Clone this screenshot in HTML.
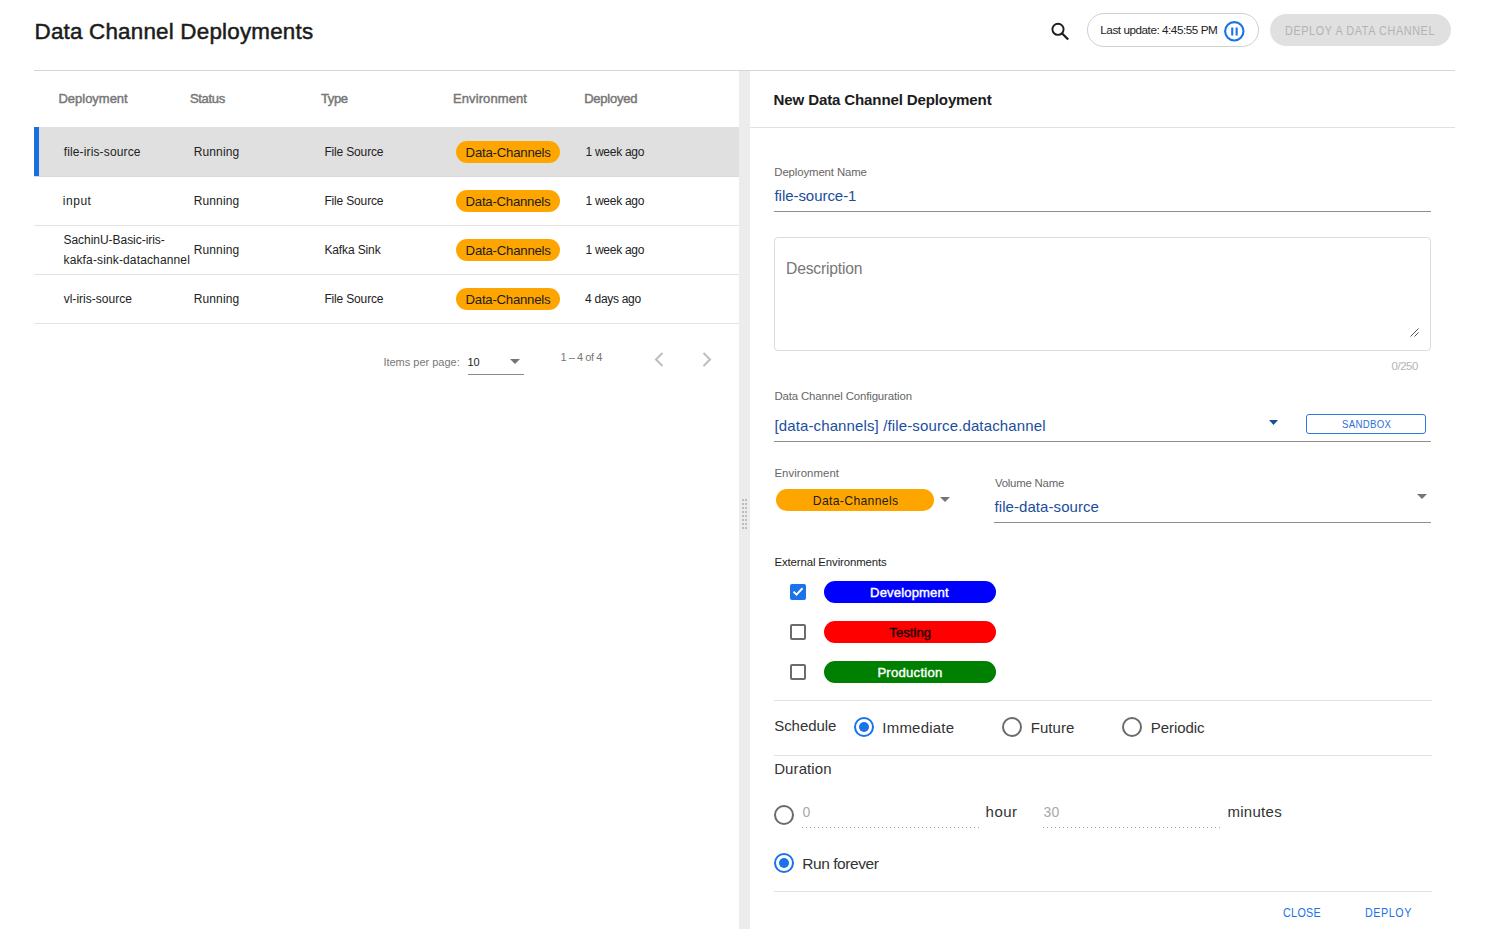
<!DOCTYPE html>
<html><head><meta charset="utf-8">
<style>
*{box-sizing:border-box;margin:0;padding:0}
html,body{width:1494px;height:929px;overflow:hidden;background:#fff}
body{position:relative;font-family:"Liberation Sans",sans-serif;color:#222}
.a{position:absolute;white-space:nowrap;line-height:1}
.ln{position:absolute;height:1px}
</style></head><body>

<!-- header -->
<div class="a" id="title" style="-webkit-text-stroke:0.5px #1c1c1c;left:34.5px;top:20.9px;font-size:22.4px;color:#1c1c1c;letter-spacing:0.21px">Data Channel Deployments</div>
<svg class="a" style="left:1048px;top:19px" width="24" height="24" viewBox="0 0 24 24"><circle cx="10" cy="10.3" r="5.6" fill="none" stroke="#1c1c1c" stroke-width="1.9"/><path d="M13.9 14.3L20.2 20.5" stroke="#1c1c1c" stroke-width="2.3"/></svg>
<div class="a" style="left:1087px;top:13px;width:172px;height:34px;border:1px solid #d0d0d0;border-radius:17px"></div>
<div class="a" id="lastupd" style="left:1100.3px;top:24.2px;font-size:11.7px;color:#222;letter-spacing:-0.45px">Last update: 4:45:55 PM</div>
<svg class="a" style="left:1224px;top:20.5px" width="21" height="21" viewBox="0 0 21 21"><circle cx="10.3" cy="10.3" r="9.2" fill="none" stroke="#1a73e8" stroke-width="2.1"/><rect x="7.2" y="6.5" width="2.1" height="8" fill="#1a73e8"/><rect x="11.6" y="6.5" width="2.1" height="8" fill="#1a73e8"/></svg>
<div class="a" style="left:1270px;top:14px;width:181px;height:32px;background:#e0e0e0;border-radius:16px"></div>
<div class="a" id="deploybtn" style="left:1285.3px;top:24.7px;font-size:12px;color:#b3b3b3;letter-spacing:0.70px;transform:scaleX(0.9);transform-origin:0 0">DEPLOY A DATA CHANNEL</div>
<div class="ln" style="left:34px;top:70px;width:1421px;background:#d6d6d6"></div>

<!-- table header -->
<div class="a" id="t1" style="-webkit-text-stroke:0.45px #777;left:58.5px;top:92.2px;font-size:13px;font-weight:normal;color:#777;letter-spacing:-0.02px">Deployment</div>
<div class="a" id="t2" style="-webkit-text-stroke:0.45px #777;left:190.0px;top:92.2px;font-size:13px;font-weight:normal;color:#777;letter-spacing:-0.34px">Status</div>
<div class="a" id="t3" style="-webkit-text-stroke:0.45px #777;left:321.0px;top:92.2px;font-size:13px;font-weight:normal;color:#777;letter-spacing:-0.38px">Type</div>
<div class="a" id="t4" style="-webkit-text-stroke:0.45px #777;left:453.0px;top:92.2px;font-size:13px;font-weight:normal;color:#777;letter-spacing:0.10px">Environment</div>
<div class="a" id="t5" style="-webkit-text-stroke:0.45px #777;left:584.2px;top:92.2px;font-size:13px;font-weight:normal;color:#777;letter-spacing:-0.23px">Deployed</div>

<!-- rows -->
<div class="a" style="left:34px;top:127px;width:705px;height:49px;background:#e0e0e0"></div>
<div class="a" style="left:34px;top:127px;width:5px;height:49px;background:#1a6fe0"></div>
<div class="ln" style="left:34px;top:176px;width:705px;background:#d9d9d9"></div>
<div class="ln" style="left:34px;top:225px;width:705px;background:#e3e3e3"></div>
<div class="ln" style="left:34px;top:274px;width:705px;background:#e3e3e3"></div>
<div class="ln" style="left:34px;top:323px;width:705px;background:#e3e3e3"></div>

<div class="a" id="t6" style="left:63.7px;top:145.8px;font-size:12px;color:#222;letter-spacing:0.14px">file-iris-source</div>
<div class="a" id="t7" style="left:193.8px;top:145.8px;font-size:12px;color:#222;letter-spacing:0.10px">Running</div>
<div class="a" id="t8" style="left:324.4px;top:145.8px;font-size:12px;color:#222;letter-spacing:-0.16px">File Source</div>
<div class="a" style="left:456px;top:141px;width:104px;height:22px;background:#ffa500;border-radius:11px"></div>
<div class="a" id="t9" style="left:465.6px;top:145.7px;font-size:13.2px;color:#1c1c1c;letter-spacing:-0.22px">Data-Channels</div>
<div class="a" id="t10" style="left:585.5px;top:145.8px;font-size:12px;color:#222;letter-spacing:-0.27px">1 week ago</div>

<div class="a" id="t11" style="left:62.7px;top:194.9px;font-size:12px;color:#222;letter-spacing:0.56px">input</div>
<div class="a" id="t12" style="left:193.8px;top:194.9px;font-size:12px;color:#222;letter-spacing:0.10px">Running</div>
<div class="a" id="t13" style="left:324.4px;top:194.9px;font-size:12px;color:#222;letter-spacing:-0.16px">File Source</div>
<div class="a" style="left:456px;top:190px;width:104px;height:22px;background:#ffa500;border-radius:11px"></div>
<div class="a" id="t14" style="left:465.6px;top:194.9px;font-size:13.2px;color:#1c1c1c;letter-spacing:-0.25px">Data-Channels</div>
<div class="a" id="t15" style="left:585.5px;top:194.9px;font-size:12px;color:#222;letter-spacing:-0.27px">1 week ago</div>

<div class="a" id="t16" style="left:63.5px;top:233.9px;font-size:12px;color:#222;letter-spacing:-0.04px">SachinU-Basic-iris-</div>
<div class="a" id="t17" style="left:63.5px;top:253.7px;font-size:12px;color:#222;letter-spacing:0.14px">kakfa-sink-datachannel</div>
<div class="a" id="t18" style="left:193.8px;top:243.9px;font-size:12px;color:#222;letter-spacing:0.10px">Running</div>
<div class="a" id="t19" style="left:324.4px;top:243.9px;font-size:12px;color:#222;letter-spacing:-0.12px">Kafka Sink</div>
<div class="a" style="left:456px;top:239px;width:104px;height:22px;background:#ffa500;border-radius:11px"></div>
<div class="a" id="t20" style="left:465.6px;top:243.9px;font-size:13.2px;color:#1c1c1c;letter-spacing:-0.22px">Data-Channels</div>
<div class="a" id="t21" style="left:585.5px;top:243.9px;font-size:12px;color:#222;letter-spacing:-0.27px">1 week ago</div>

<div class="a" id="t22" style="left:63.7px;top:292.7px;font-size:12px;color:#222;letter-spacing:0.01px">vl-iris-source</div>
<div class="a" id="t23" style="left:193.8px;top:292.7px;font-size:12px;color:#222;letter-spacing:0.10px">Running</div>
<div class="a" id="t24" style="left:324.4px;top:292.7px;font-size:12px;color:#222;letter-spacing:-0.16px">File Source</div>
<div class="a" style="left:456px;top:288px;width:104px;height:22px;background:#ffa500;border-radius:11px"></div>
<div class="a" id="t25" style="left:465.6px;top:292.7px;font-size:13.2px;color:#1c1c1c;letter-spacing:-0.25px">Data-Channels</div>
<div class="a" id="t26" style="left:585.1px;top:292.8px;font-size:12px;color:#222;letter-spacing:-0.30px">4 days ago</div>

<!-- pagination -->
<div class="a" id="t27" style="left:383.4px;top:356.9px;font-size:11px;color:#777;letter-spacing:-0.01px">Items per page:</div>
<div class="a" id="t28" style="left:467.6px;top:356.9px;font-size:11px;color:#222;letter-spacing:-0.30px">10</div>
<svg class="a" style="left:510px;top:359px" width="10" height="5" viewBox="0 0 10 5"><path d="M0 0h10L5 5z" fill="#757575"/></svg>
<div class="ln" style="left:468px;top:374px;width:56px;background:#8a8a8a"></div>
<div class="a" id="t29" style="left:560.4px;top:352.0px;font-size:11px;color:#777;letter-spacing:-0.44px">1 – 4 of 4</div>
<svg class="a" style="left:654px;top:352px" width="10" height="15" viewBox="0 0 10 15"><path d="M8.5 1L2 7.5 8.5 14" fill="none" stroke="#bdbdbd" stroke-width="2"/></svg>
<svg class="a" style="left:702px;top:352px" width="10" height="15" viewBox="0 0 10 15"><path d="M1.5 1L8 7.5 1.5 14" fill="none" stroke="#bdbdbd" stroke-width="2"/></svg>

<!-- splitter -->
<div class="a" style="left:739px;top:71px;width:11px;height:858px;background:#ececec"></div>
<svg class="a" style="left:742px;top:499px" width="5" height="31" viewBox="0 0 5 31">
<g fill="#bcbcbc"><rect x="0" y="0" width="2" height="2"/><rect x="3" y="0" width="2" height="2"/><rect x="0" y="4" width="2" height="2"/><rect x="3" y="4" width="2" height="2"/><rect x="0" y="8" width="2" height="2"/><rect x="3" y="8" width="2" height="2"/><rect x="0" y="12" width="2" height="2"/><rect x="3" y="12" width="2" height="2"/><rect x="0" y="16" width="2" height="2"/><rect x="3" y="16" width="2" height="2"/><rect x="0" y="20" width="2" height="2"/><rect x="3" y="20" width="2" height="2"/><rect x="0" y="24" width="2" height="2"/><rect x="3" y="24" width="2" height="2"/><rect x="0" y="28" width="2" height="2"/><rect x="3" y="28" width="2" height="2"/></g></svg>

<!-- right panel -->
<div class="a" id="t30" style="left:773.6px;top:91.9px;font-size:15.1px;font-weight:bold;color:#1c1c1c;letter-spacing:-0.16px">New Data Channel Deployment</div>
<div class="ln" style="left:750px;top:127px;width:705px;background:#e0e0e0"></div>

<div class="a" id="t31" style="left:774.3px;top:166.9px;font-size:11.4px;color:#666;letter-spacing:-0.12px">Deployment Name</div>
<div class="a" id="t32" style="left:774.5px;top:187.7px;font-size:15px;color:#1a4e9c;letter-spacing:-0.05px">file-source-1</div>
<div class="ln" style="left:774px;top:211px;width:657px;background:#8e8e8e"></div>

<div class="a" style="left:774px;top:237px;width:657px;height:114px;border:1px solid #dcdcdc;border-radius:4px"></div>
<div class="a" id="t33" style="left:786.0px;top:261.0px;font-size:15.7px;color:#777;letter-spacing:-0.20px">Description</div>
<svg class="a" style="left:1410px;top:328px" width="9" height="9" viewBox="0 0 9 9"><path d="M0.5 8.5L8.5 0.5M4.5 8.5L8.5 4.5" stroke="#555" stroke-width="1"/></svg>
<div class="a" id="t34" style="left:1391.5px;top:360.9px;font-size:11.4px;color:#b3b3b3;letter-spacing:-0.42px">0/250</div>

<div class="a" id="t35" style="left:774.4px;top:391.3px;font-size:11.4px;color:#666;letter-spacing:-0.12px">Data Channel Configuration</div>
<div class="a" id="t36" style="left:774.4px;top:417.8px;font-size:15px;color:#1a4e9c;letter-spacing:0.13px">[data-channels] /file-source.datachannel</div>
<svg class="a" style="left:1269px;top:420px" width="9" height="5" viewBox="0 0 9 5"><path d="M0 0h9L4.5 5z" fill="#1a4e9c"/></svg>
<div class="a" style="left:1306px;top:414px;width:120px;height:20px;border:1px solid #2a7ae2;border-radius:3px"></div>
<div class="a" id="t37" style="left:1342.1px;top:418.7px;font-size:11.2px;color:#2a6fd6;letter-spacing:0.36px;transform:scaleX(0.86);transform-origin:0 0">SANDBOX</div>
<div class="ln" style="left:774px;top:441px;width:657px;background:#8e8e8e"></div>

<div class="a" id="t38" style="left:774.4px;top:468.1px;font-size:11.4px;color:#666;letter-spacing:0.07px">Environment</div>
<div class="a" style="left:776px;top:489px;width:158px;height:22px;background:#ffa500;border-radius:11px"></div>
<div class="a" id="t39" style="left:812.8px;top:494.6px;font-size:12.2px;color:#1c1c1c;letter-spacing:0.33px">Data-Channels</div>
<svg class="a" style="left:940px;top:497px" width="10" height="5" viewBox="0 0 10 5"><path d="M0 0h10L5 5z" fill="#757575"/></svg>

<div class="a" id="t40" style="left:994.9px;top:477.7px;font-size:11.4px;color:#666;letter-spacing:-0.21px">Volume Name</div>
<div class="a" id="t41" style="left:994.5px;top:499.0px;font-size:15px;color:#1a4e9c;letter-spacing:0.07px">file-data-source</div>
<svg class="a" style="left:1417px;top:494px" width="10" height="5" viewBox="0 0 10 5"><path d="M0 0h10L5 5z" fill="#757575"/></svg>
<div class="ln" style="left:994px;top:522px;width:437px;background:#8e8e8e"></div>

<div class="a" id="t42" style="left:774.5px;top:557.0px;font-size:11.4px;color:#222;letter-spacing:-0.12px">External Environments</div>
<div class="a" style="left:790px;top:584px;width:16px;height:16px;background:#1a73e8;border-radius:2px"></div>
<svg class="a" style="left:790px;top:584px" width="16" height="16" viewBox="0 0 16 16"><path d="M3.5 7.6l3 3 6-6.4" fill="none" stroke="#fff" stroke-width="2"/></svg>
<div class="a" style="left:790px;top:624px;width:16px;height:16px;border:2px solid #6b6b6b;border-radius:2px"></div>
<div class="a" style="left:790px;top:664px;width:16px;height:16px;border:2px solid #6b6b6b;border-radius:2px"></div>
<div class="a" style="left:824px;top:581px;width:172px;height:22px;background:#0000ff;border-radius:11px"></div>
<div class="a" style="left:824px;top:621px;width:172px;height:22px;background:#ff0000;border-radius:11px"></div>
<div class="a" style="left:824px;top:661px;width:172px;height:22px;background:#008000;border-radius:11px"></div>
<div class="a" id="t43" style="-webkit-text-stroke:0.4px #fff;left:870.1px;top:586.0px;font-size:13.1px;font-weight:normal;color:#fff;letter-spacing:0.13px">Development</div>
<div class="a" id="t44" style="-webkit-text-stroke:0.4px #1a0000;left:889.3px;top:626.0px;font-size:13.1px;font-weight:normal;color:#1a0000;letter-spacing:0.04px">Testing</div>
<div class="a" id="t45" style="-webkit-text-stroke:0.4px #fff;left:877.4px;top:666.0px;font-size:13.1px;font-weight:normal;color:#fff;letter-spacing:0.25px">Production</div>

<div class="ln" style="left:774px;top:700px;width:658px;background:#e0e0e0"></div>
<div class="a" id="t46" style="left:774.2px;top:718.2px;font-size:15px;color:#333;letter-spacing:-0.05px">Schedule</div>
<svg class="a" style="left:854px;top:717px" width="20" height="20" viewBox="0 0 20 20"><circle cx="10" cy="10" r="9" fill="none" stroke="#1a73e8" stroke-width="2"/><circle cx="10" cy="10" r="5" fill="#1a73e8"/></svg>
<div class="a" id="t47" style="left:882.3px;top:719.8px;font-size:15px;color:#333;letter-spacing:0.22px">Immediate</div>
<svg class="a" style="left:1002px;top:717px" width="20" height="20" viewBox="0 0 20 20"><circle cx="10" cy="10" r="9" fill="none" stroke="#6b6b6b" stroke-width="2"/></svg>
<div class="a" id="t48" style="left:1030.7px;top:720.2px;font-size:15px;color:#333;letter-spacing:0.08px">Future</div>
<svg class="a" style="left:1122px;top:717px" width="20" height="20" viewBox="0 0 20 20"><circle cx="10" cy="10" r="9" fill="none" stroke="#6b6b6b" stroke-width="2"/></svg>
<div class="a" id="t49" style="left:1150.7px;top:720.0px;font-size:15px;color:#333;letter-spacing:-0.05px">Periodic</div>
<div class="ln" style="left:774px;top:755px;width:658px;background:#e0e0e0"></div>

<div class="a" id="t50" style="left:774.2px;top:760.8px;font-size:15px;color:#333;letter-spacing:0.10px">Duration</div>
<svg class="a" style="left:774px;top:805px" width="20" height="20" viewBox="0 0 20 20"><circle cx="10" cy="10" r="9" fill="none" stroke="#6b6b6b" stroke-width="2"/></svg>
<div class="a" id="t51" style="left:802.4px;top:804.9px;font-size:14px;color:#a8a8a8;letter-spacing:-1.00px">0</div>
<div class="ln" style="left:802px;top:827px;width:177px;background:repeating-linear-gradient(90deg,#a6a6a6 0 1px,transparent 1px 4px)"></div>
<div class="a" id="t52" style="left:985.6px;top:804.1px;font-size:15px;color:#333;letter-spacing:0.44px">hour</div>
<div class="a" id="t53" style="left:1043.4px;top:805.0px;font-size:14px;color:#a8a8a8;letter-spacing:0.40px">30</div>
<div class="ln" style="left:1043px;top:827px;width:178px;background:repeating-linear-gradient(90deg,#a6a6a6 0 1px,transparent 1px 4px)"></div>
<div class="a" id="t54" style="left:1227.5px;top:804.0px;font-size:15px;color:#333;letter-spacing:0.27px">minutes</div>
<svg class="a" style="left:774px;top:853px" width="20" height="20" viewBox="0 0 20 20"><circle cx="10" cy="10" r="9" fill="none" stroke="#1a73e8" stroke-width="2"/><circle cx="10" cy="10" r="5" fill="#1a73e8"/></svg>
<div class="a" id="t55" style="left:802.2px;top:855.6px;font-size:15.5px;color:#333;letter-spacing:-0.43px">Run forever</div>
<div class="ln" style="left:774px;top:891px;width:658px;background:#e0e0e0"></div>

<div class="a" id="t56" style="left:1283.2px;top:907.0px;font-size:12.5px;color:#1a73e8;letter-spacing:0.39px;transform:scaleX(0.86);transform-origin:0 0">CLOSE</div>
<div class="a" id="t57" style="left:1365.2px;top:907.0px;font-size:12.5px;color:#1a73e8;letter-spacing:0.63px;transform:scaleX(0.86);transform-origin:0 0">DEPLOY</div>

</body></html>
